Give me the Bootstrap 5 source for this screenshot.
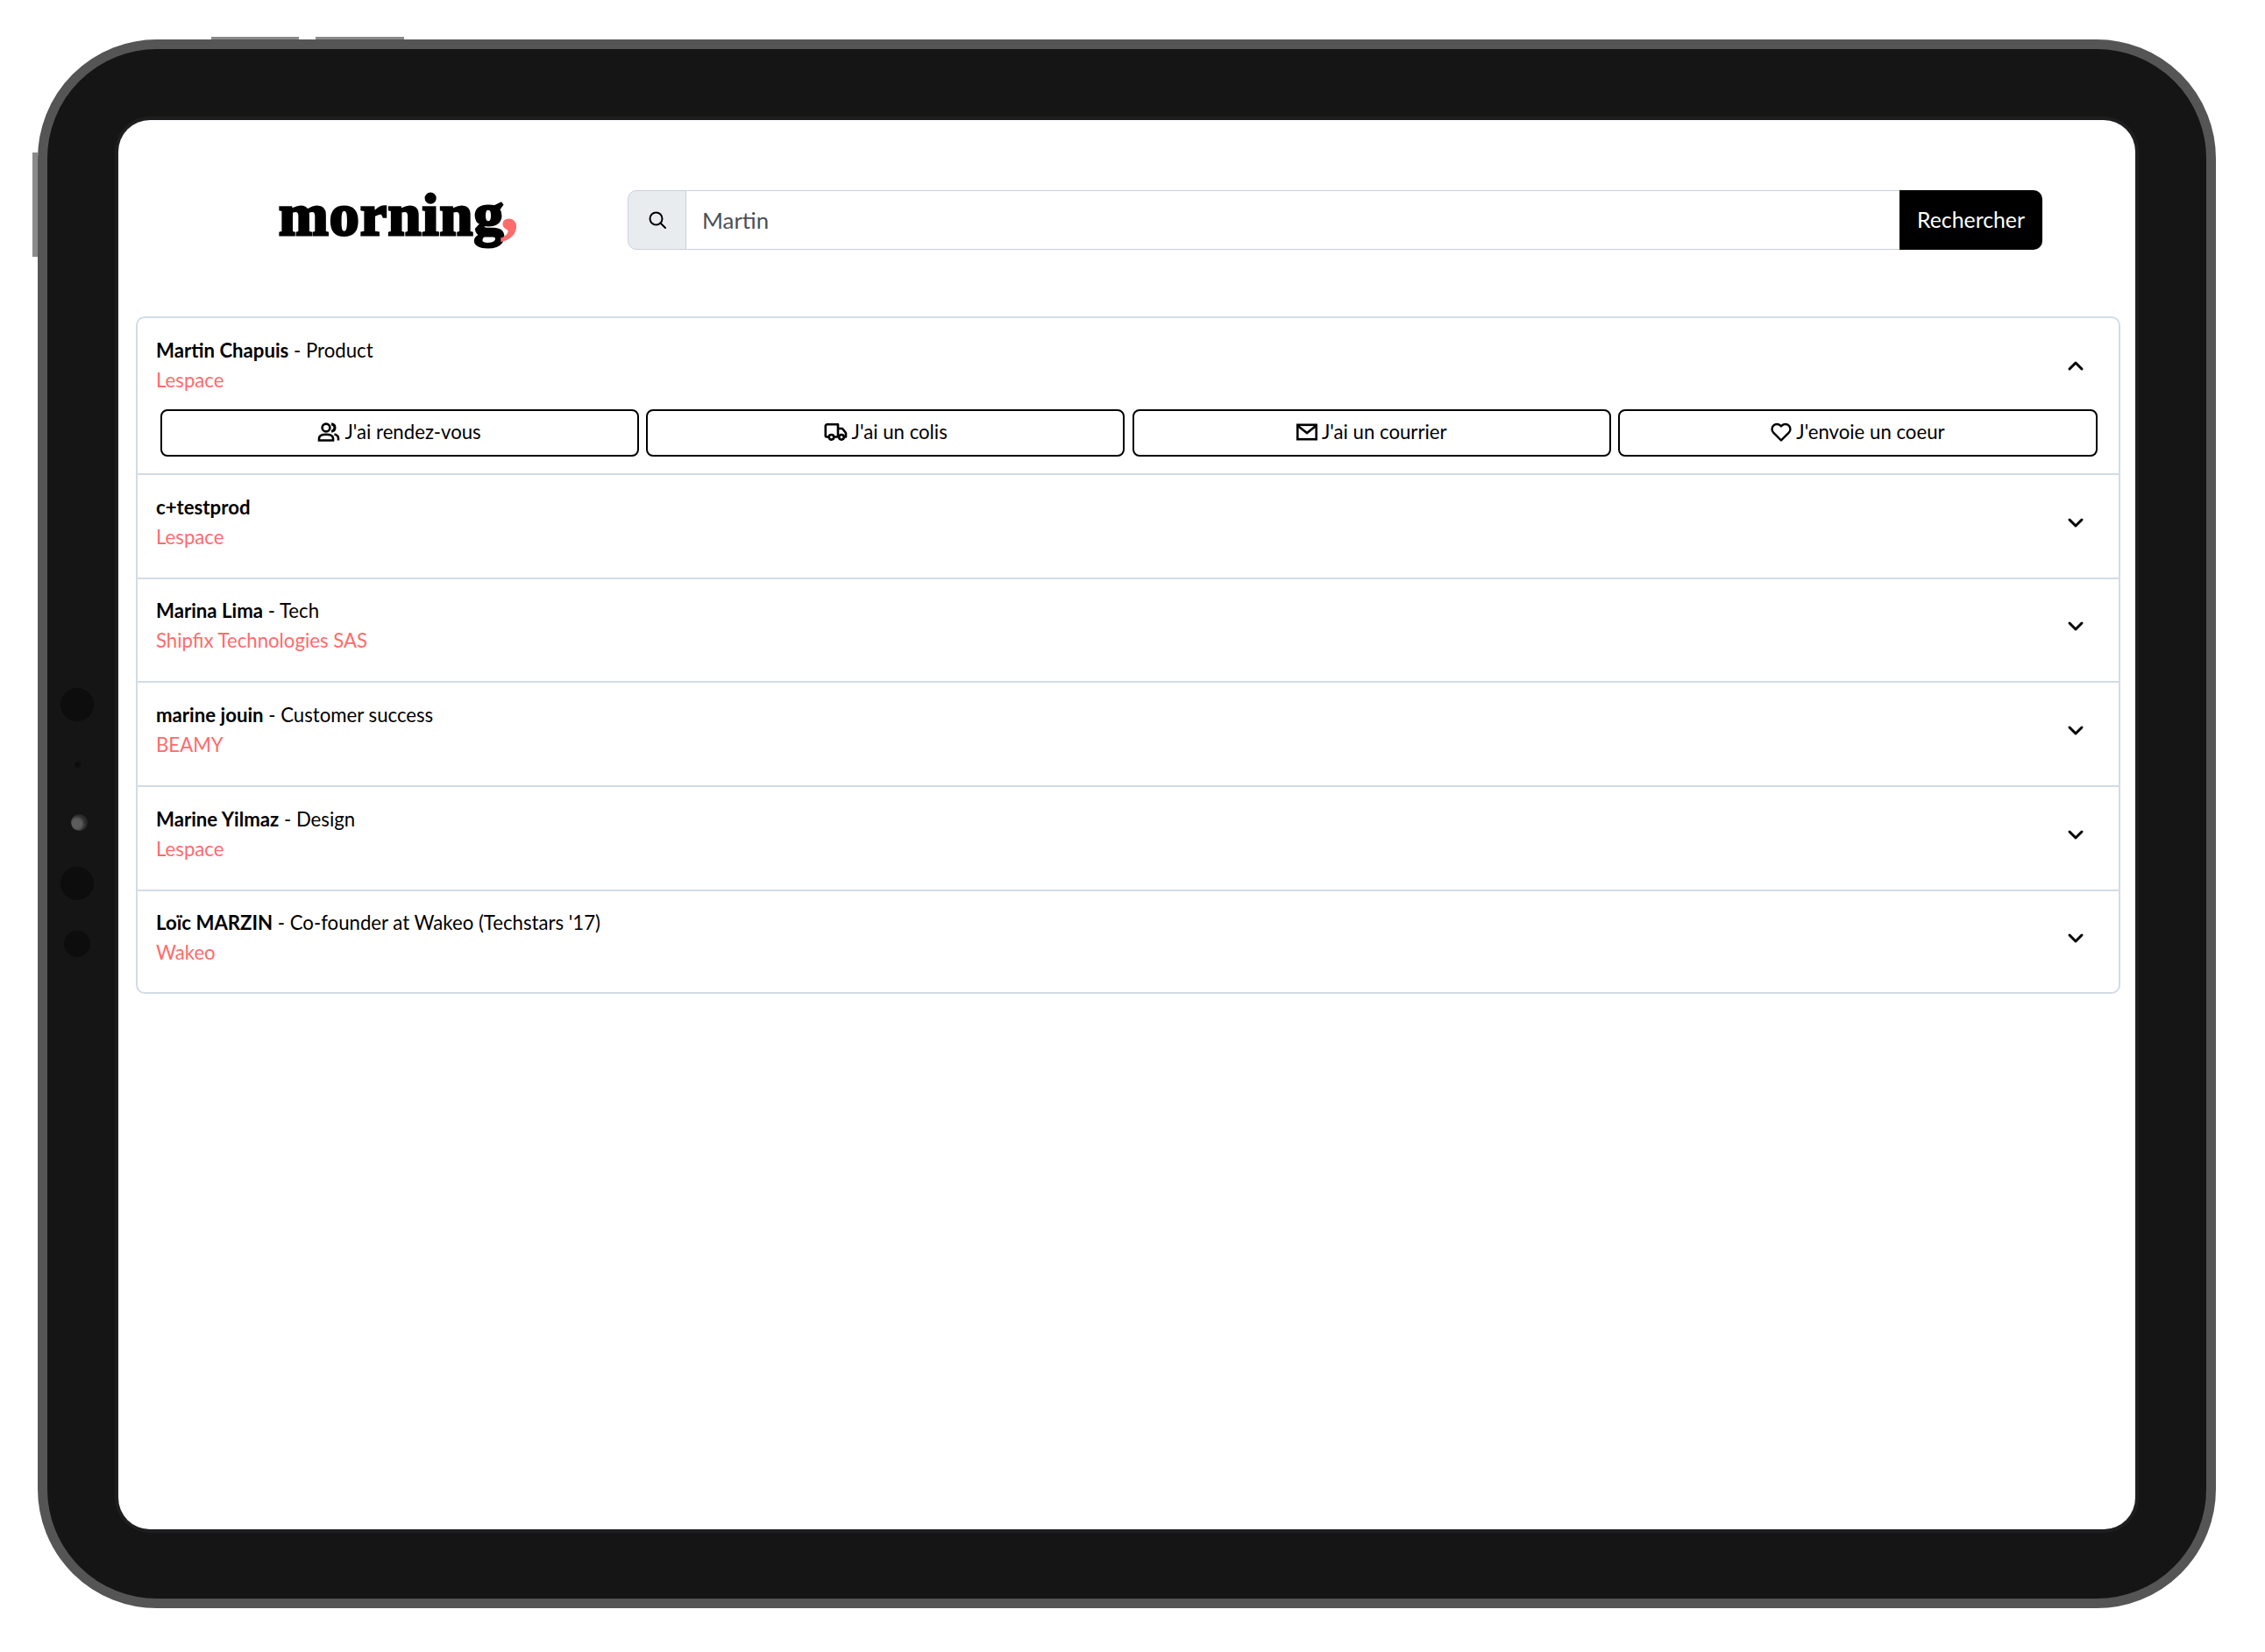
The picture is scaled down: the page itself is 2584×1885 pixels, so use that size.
<!DOCTYPE html>
<html lang="fr">
<head>
<meta charset="utf-8">
<title>morning,</title>
<link href="https://cdn.jsdelivr.net/npm/bootstrap@5.3.0/dist/css/bootstrap.min.css" rel="stylesheet">
<style>
html,body{background:#fff;margin:0}
body{font-family:Lato,"Noto Sans",sans-serif;font-size:22.2px;color:#000;width:2584px;height:1885px;padding:45px 56px 50px 43px}
.tablet{position:relative;width:2485px;height:1790px;background:#151515;border:11px solid #555;border-radius:136px;padding:81px 81px 79px 81px}
.hw-btn{position:absolute;background:#8a8a8a}
.hw-top{top:-14px;height:3px}
.hw-left{left:-17px;top:118px;width:6px;height:119px}
.sensor{position:absolute;border-radius:50%;background:#0d0d0d}
.cam{background:radial-gradient(circle at 35% 58%,#5c5c5c 0 32%,#2e2e2e 58%,#1c1c1c)}
.screen{background:#fff;border-radius:36px;height:100%;box-shadow:0 0 0 4px #1e1e20;padding:80px 17px 0 20px}
.head-row{display:flex;margin-bottom:76px;padding-right:89px}
.logo-box{width:561px;flex:none;padding-left:163px;height:68px;display:flex;align-items:center}
.logo-word{font-family:"Liberation Serif",serif;font-weight:700;font-size:68px;line-height:1;color:#000;-webkit-text-stroke:3px #000;letter-spacing:1.2px;white-space:nowrap;padding-bottom:12px}
.logo-word span{color:#ff6b6b;-webkit-text-stroke:1px #ff6b6b;font-size:84px;line-height:0;vertical-align:6px;margin-left:-5px}
.search-box{flex:1;height:68px}
.search-box .input-group-text{width:67px;justify-content:center;background:#e9ecef;border-color:#c8cfe0;border-radius:10px 0 0 10px;padding:0}
.search-box .form-control{font-size:25.8px;color:#495057;border-color:#c8cfe0;padding:0 18px;box-shadow:none;height:68px}
.search-box .btn-search{background:#000;border:0;color:#fff;font-size:24.8px;width:163px;border-radius:0 10px 10px 0;padding:0}
.people{border-radius:10px;--bs-list-group-border-color:#d3dbe8}
.people .list-group-item{padding:0 21px;border-width:2px 2px 0;border-color:#d3dbe8;height:118.7px;color:#000}
.people .list-group-item:last-child{border-bottom-width:2px;height:119.7px}
.people .list-group-item.open{height:179px}
.person-row{display:flex;justify-content:space-between;align-items:center;height:107px;line-height:34px}
.open .person-row{height:104px;padding-top:3px}
.pname{font-weight:700}
.pcompany{color:#ff6b6b}
.chev{width:20px;height:20px;margin-right:18px;display:block}
.act-row{display:flex;gap:8.5px;padding:0 3.5px 0 4.500px}
.act-btn{flex:1 1 0;height:54px;border:2px solid #000;border-radius:8px;background:#fff;color:#000;font-size:22.2px;padding:0 0 2px;display:flex;align-items:center;justify-content:center;gap:5px}
.act-btn:hover{background:#fff;color:#000;border-color:#000}
.act-btn svg{display:block}
</style>
</head>
<body>
<div class="tablet">
  <i class="hw-btn hw-top" style="left:187px;width:100px"></i>
  <i class="hw-btn hw-top" style="left:306px;width:101px"></i>
  <i class="hw-btn hw-left"></i>
  <i class="sensor" style="left:15px;top:729px;width:38px;height:38px"></i>
  <i class="sensor" style="left:31px;top:813px;width:7px;height:7px"></i>
  <i class="sensor cam" style="left:27px;top:873px;width:19px;height:19px"></i>
  <i class="sensor" style="left:15px;top:933px;width:38px;height:38px"></i>
  <i class="sensor" style="left:19px;top:1006px;width:30px;height:30px"></i>
  <div class="screen">
    <div class="head-row">
      <div class="logo-box"><div class="logo-word">morning<span>,</span></div></div>
      <div class="input-group search-box">
        <span class="input-group-text">
          <svg width="22" height="22" viewBox="0 0 22 22" fill="none" stroke="#000" stroke-width="2"><circle cx="9.5" cy="9.5" r="7"/><path d="M14.5 14.5 20 20" stroke-linecap="round"/></svg>
        </span>
        <input class="form-control" type="text" value="Martin" aria-label="Recherche">
        <button class="btn btn-search" type="button">Rechercher</button>
      </div>
    </div>
    <ul class="list-group people">
      <li class="list-group-item open">
        <div class="person-row">
          <div><div><span class="pname">Martin Chapuis</span> - Product</div><div class="pcompany">Lespace</div></div>
          <svg class="chev" viewBox="0 0 20 20" fill="none" stroke="#000" stroke-width="3" stroke-linecap="round" stroke-linejoin="round"><path d="M3 14 10 7l7 7"/></svg>
        </div>
        <div class="act-row">
          <button class="btn act-btn" type="button"><svg width="26" height="22" viewBox="0 0 26 22" fill="none" stroke="#000" stroke-width="2.6"><circle cx="10" cy="6" r="4.4"/><path d="M2 20.500v-2.200c0-3 3-4.600 8-4.600s8 1.600 8 4.600v2.200z"/><path d="M16 1.800c2.800.4 4 2.200 4 4.200s-1.200 3.800-4 4.200" stroke-width="3"/><path d="M19.500 13.500c2.700.7 4.500 2.300 4.500 4.600v2.400"/></svg>J'ai rendez-vous</button>
          <button class="btn act-btn" type="button"><svg width="27" height="20" viewBox="0 0 26 20" fill="none" stroke="#000" stroke-width="2.6" stroke-linejoin="round"><path d="M5 15.500H2.500a1.200 1.200 0 0 1-1.200-1.200V3a1.700 1.700 0 0 1 1.700-1.700h12.500V15.500H11"/><path d="M15.500 6h5l4 5v4.500h-2"/><circle cx="8" cy="15.800" r="2.800"/><circle cx="19.500" cy="15.800" r="2.800"/></svg>J'ai un colis</button>
          <button class="btn act-btn" type="button"><svg width="24" height="20" viewBox="0 0 24 20" fill="none" stroke="#000" stroke-width="2.6" stroke-linejoin="miter"><rect x="1.300" y="1.800" width="21.400" height="16.400"/><path d="M1.800 3 12 11l10.200-8"/></svg>J'ai un courrier</button>
          <button class="btn act-btn" type="button"><svg width="24" height="22" viewBox="0 0 24 22" fill="none" stroke="#000" stroke-width="2.400" stroke-linejoin="round"><path d="M12 20.500 3.200 11.700a5.700 5.700 0 0 1 0-8 5.600 5.600 0 0 1 8 0l.8.800.8-.8a5.600 5.600 0 0 1 8 0 5.700 5.700 0 0 1 0 8z"/></svg>J'envoie un coeur</button>
        </div>
      </li>
      <li class="list-group-item"><div class="person-row"><div><div><span class="pname">c+testprod</span></div><div class="pcompany">Lespace</div></div><svg class="chev" viewBox="0 0 20 20" fill="none" stroke="#000" stroke-width="3" stroke-linecap="round" stroke-linejoin="round"><path d="m3 7 7 7 7-7"/></svg></div></li>
      <li class="list-group-item"><div class="person-row"><div><div><span class="pname">Marina Lima</span> - Tech</div><div class="pcompany">Shipfix Technologies SAS</div></div><svg class="chev" viewBox="0 0 20 20" fill="none" stroke="#000" stroke-width="3" stroke-linecap="round" stroke-linejoin="round"><path d="m3 7 7 7 7-7"/></svg></div></li>
      <li class="list-group-item"><div class="person-row"><div><div><span class="pname">marine jouin</span> - Customer success</div><div class="pcompany">BEAMY</div></div><svg class="chev" viewBox="0 0 20 20" fill="none" stroke="#000" stroke-width="3" stroke-linecap="round" stroke-linejoin="round"><path d="m3 7 7 7 7-7"/></svg></div></li>
      <li class="list-group-item"><div class="person-row"><div><div><span class="pname">Marine Yilmaz</span> - Design</div><div class="pcompany">Lespace</div></div><svg class="chev" viewBox="0 0 20 20" fill="none" stroke="#000" stroke-width="3" stroke-linecap="round" stroke-linejoin="round"><path d="m3 7 7 7 7-7"/></svg></div></li>
      <li class="list-group-item"><div class="person-row"><div><div><span class="pname">Loïc MARZIN</span> - Co-founder at Wakeo (Techstars '17)</div><div class="pcompany">Wakeo</div></div><svg class="chev" viewBox="0 0 20 20" fill="none" stroke="#000" stroke-width="3" stroke-linecap="round" stroke-linejoin="round"><path d="m3 7 7 7 7-7"/></svg></div></li>
    </ul>
  </div>
</div>
<script src="https://cdn.jsdelivr.net/npm/bootstrap@5.3.0/dist/js/bootstrap.bundle.min.js"></script>
</body>
</html>
